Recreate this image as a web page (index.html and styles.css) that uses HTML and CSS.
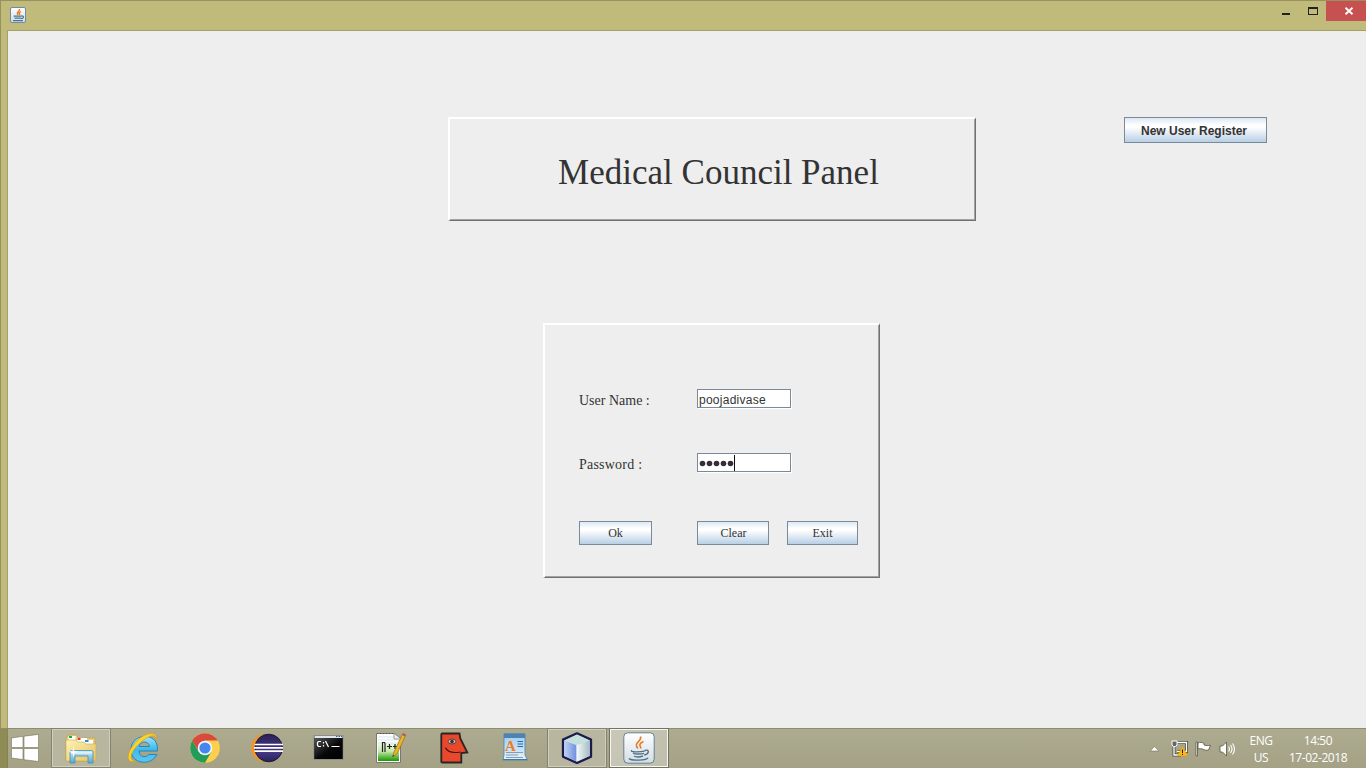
FILE: index.html
```html
<!DOCTYPE html>
<html lang="en">
<head>
<meta charset="utf-8">
<title>Medical Council Panel</title>
<link rel="stylesheet" href="styles.css">
</head>
<body>
<div class="desktop">
  <header class="titlebar">
    <svg class="app-icon" width="16" height="16" viewBox="0 0 32 32">
      <defs><linearGradient id="jbg" x1="0" y1="0" x2="0" y2="1"><stop offset="0" stop-color="#fff"/><stop offset="1" stop-color="#d3dce3"/></linearGradient></defs>
      <rect x="1" y="1" width="30" height="30" rx="3" fill="url(#jbg)" stroke="#6f8ca3" stroke-width="2"/>
      <path d="M19 4c2 5-8 6-3 12M22 9c-5 3-4 4-2 7" fill="none" stroke="#ee7a1c" stroke-width="2.8"/>
      <path d="M7 18h16M9 22h13M6 27h20M23 18c6-1 5 5-1 5" fill="none" stroke="#4a7694" stroke-width="2.5"/>
    </svg>
    <div class="controls">
      <svg width="70" height="22" viewBox="0 0 70 22" shape-rendering="crispEdges">
        <path d="M26 13h8v2h-8z" fill="#222"/>
        <path d="M52 7h10v8H52zM53 9v5h8V9z" fill="#222" fill-rule="evenodd"/>
      </svg>
      <div class="close"><svg width="10" height="8" viewBox="0 0 10 8"><path d="M1.500.7l7 6.600M8.500.7l-7 6.600" stroke="#fff" stroke-width="1.900"/></svg></div>
    </div>
  </header>

  <main class="frame">
    <section class="raised heading"><h1>Medical Council Panel</h1></section>
    <button class="btn register">New User Register</button>
    <section class="raised login">
      <label>User Name :</label>
      <div class="field">poojadivase</div>
      <label class="pw-label">Password :</label>
      <div class="field password"><svg width="35" height="7" viewBox="0 0 35 7"><g fill="#332e38"><circle cx="3.5" cy="3.5" r="2.8"/><circle cx="10.5" cy="3.5" r="2.8"/><circle cx="17.5" cy="3.5" r="2.8"/><circle cx="24.5" cy="3.5" r="2.8"/><circle cx="31.5" cy="3.5" r="2.8"/></g></svg><i class="caret"></i></div>
      <div class="actions">
        <button class="btn ok">Ok</button>
        <button class="btn clear">Clear</button>
        <button class="btn exit">Exit</button>
      </div>
    </section>
  </main>

  <footer class="taskbar">
    <div class="start"><svg width="28" height="28" viewBox="0 0 28 28"><path d="M.5 4L12 2.3V13.500H.5zM13 2.200L27.500.4v13.100H13zM.5 14.500H12v11L.5 24zM13 14.500h14.500v13L13 25.700z" fill="#fff" stroke="#77765c" stroke-width=".6"/></svg></div>
    <nav class="apps">
      <div class="app open"><svg width="32" height="32" viewBox="0 0 32 32">
        <defs><linearGradient id="fold" x1="0" y1="0" x2="1" y2="1"><stop offset="0" stop-color="#fff3b4"/><stop offset="1" stop-color="#e5c15f"/></linearGradient><linearGradient id="tray" x1="0" y1="0" x2="0" y2="1"><stop offset="0" stop-color="#d0edf8"/><stop offset="1" stop-color="#55a8d2"/></linearGradient></defs>
        <path d="M2 5l2-2h8l1 3h17v23H1V7z" fill="#e9ce79" stroke="#bd9d47" stroke-width=".6"/>
        <path d="M3.500 4h7v4h-7zM12 6h10v4H12zM19 8h9v4h-9z" fill="#fff"/>
        <path d="M4 4h3v2H4z" fill="#13b52b"/><path d="M12.500 6h3v2h-3z" fill="#de4023"/><path d="M20 8h3.500v2H20z" fill="#258ddd"/>
        <path d="M1 8h10l2 2h6l2 2h10v17H1z" fill="url(#fold)" stroke="#c9a84d" stroke-width=".6"/>
        <path d="M5 20q0-1.500 1.500-1.500h20Q28 18.500 28 20v11h-5v-7H10v7H5z" fill="url(#tray)" stroke="#4290b7" stroke-width=".8"/>
        <path d="M6 21h21" stroke="#fff" stroke-width="1.200" opacity=".8"/>
        <path d="M8.500 14l.8 5 4.700.8-4.700.9-.8 5-.9-5-4.600-.9 4.600-.8z" fill="#fff"/>
      </svg></div>
      <div class="app"><svg width="32" height="32" viewBox="0 0 32 32">
        <defs><linearGradient id="ie" x1="0" y1="0" x2="0" y2="1"><stop offset="0" stop-color="#9ee5fb"/><stop offset=".5" stop-color="#3fb9eb"/><stop offset="1" stop-color="#5dc7ef"/></linearGradient></defs>
        <path d="M30.500 19H12c.4 6.500 7.500 7 9.500 3.500h8.300C25 34 4 33 4 17.500 4 2 27 0 30 13c.5 2 .5 4 .5 6zM12 14.500h10.500c-.8-6-9.500-6-10.500 0z" fill="url(#ie)" stroke="#2180b5" stroke-width=".9"/>
        <path d="M29 8C32-1 18-1 8 11-1 21-1 32 8 29c-7-1-4-9 3-16C20 4 29 0 29 8z" fill="#fcd12d" stroke="#d69c11" stroke-width=".6"/>
      </svg></div>
      <div class="app"><svg width="32" height="32" viewBox="0 0 32 32">
        <circle cx="16" cy="16" r="14.800" fill="#fdd04b"/>
        <path d="M16 8.600h12.800A14.800 14.800 0 0 0 3.200 8.600l6.400 11z" fill="#d94a3e"/>
        <path d="M3.200 8.600A14.800 14.800 0 0 0 16 30.800l6.400-11.100L16 22l-6.400-2.300z" fill="#1f9d59"/>
        <circle cx="16" cy="16" r="7.300" fill="#f5f5f5"/><circle cx="16" cy="16" r="5.600" fill="#4587f1"/>
      </svg></div>
      <div class="app"><svg width="32" height="32" viewBox="0 0 32 32">
        <defs><linearGradient id="ecl" x1="0" y1="0" x2="0" y2="1"><stop offset="0" stop-color="#2c2255"/><stop offset=".65" stop-color="#47378a"/><stop offset="1" stop-color="#2a2152"/></linearGradient></defs>
        <circle cx="14.500" cy="16" r="14.300" fill="#f7941e"/><circle cx="18" cy="16" r="14.800" fill="#aaa789"/>
        <circle cx="17.700" cy="16" r="13.800" fill="url(#ecl)" stroke="#1c1836"/>
        <path d="M3.500 12.500h28.500M3 15.800h29.500M3.500 19.100h28.500" stroke="#fff" stroke-width="1.700"/>
      </svg></div>
      <div class="app"><svg width="32" height="32" viewBox="0 0 32 32">
        <defs><linearGradient id="cmd" x1="0" y1="0" x2="1" y2="1"><stop offset="0" stop-color="#555"/><stop offset=".55" stop-color="#080808"/><stop offset="1" stop-color="#000"/></linearGradient></defs>
        <rect x="1" y="3.500" width="29" height="24" fill="#000" stroke="#8b8e91"/><path d="M1.500 6h28v21h-28z" fill="url(#cmd)"/>
        <path d="M1.500 4h28v2h-28z" fill="#dbe6ef"/><path d="M23 4h1.500v1H23zM25.500 4H27v1h-1.500zM28 4h1v1h-1z" fill="#40658a"/>
        <path d="M8 9.500H5.500l-1 1v3l1 1H8M10.500 10v1.500M10.500 13v1.500M12.500 9l3 6M18.500 14.500h8" stroke="#fff" fill="none" stroke-width="1.200"/>
      </svg></div>
      <div class="app"><svg width="32" height="32" viewBox="0 0 32 32">
        <defs><linearGradient id="npp" x1="0" y1="0" x2="0" y2="1"><stop offset="0" stop-color="#f7fcef"/><stop offset=".5" stop-color="#c3e7a8"/><stop offset="1" stop-color="#189800"/></linearGradient></defs>
        <path d="M1.500 1.500h18l6 5v24h-24z" fill="#fff" stroke="#777"/><path d="M3 10h21v19H3z" fill="url(#npp)"/>
        <path d="M3 5h17M3 8h21M3 11h21" stroke="#d7e7eb"/><path d="M2 1.500h18" stroke="#555" stroke-dasharray="1 2"/><path d="M19 2v5h6" fill="#eee" stroke="#999"/>
        <path d="M7.500 20v-9.500h2l.5 1V20M12 14.500h5M14.500 12v5M18 14.500h4M20 12v5" fill="none" stroke="#222" stroke-width="1.200"/>
        <path d="M17.500 25l1.500-5L27.500 2l3 1.500L22 22z" fill="#eab42e" stroke="#957018" stroke-width=".7"/><path d="M28 1l3 1.500-1 2-3-1.500z" fill="#b85959"/><path d="M17.500 25l.5-2 1.300.6z" fill="#333"/>
      </svg></div>
      <div class="app"><svg width="32" height="32" viewBox="0 0 32 32">
        <path d="M4.500 1.500h18l.8 5 7 14-6 .500v9.500h-19q-1 0-1-1v-27q0-1 1-1z" fill="#e8482c" stroke="#2b2522" stroke-width="1.800"/>
        <path d="M8.500 15.500c2 5.500 9 5.500 15 4.500" fill="none" stroke="#421812" stroke-width="1.200"/><ellipse cx="15" cy="9.500" rx="3.800" ry="2.400" fill="#d6c9bb" stroke="#3c2824" stroke-width=".8"/><circle cx="15" cy="9.500" r="1.800" fill="#333"/>
      </svg></div>
      <div class="app"><svg width="32" height="32" viewBox="0 0 32 32">
        <defs><linearGradient id="wp" x1="0" y1="0" x2="0" y2="1"><stop offset="0" stop-color="#9bccf0"/><stop offset="1" stop-color="#e5f3fc"/></linearGradient></defs>
        <path d="M5 2h21v21l2.500 5H4l1-5z" fill="url(#wp)" stroke="#4884b4" stroke-width=".8"/><path d="M5 1.500h21V6H5z" fill="#4d82b1"/>
        <text x="6" y="18.500" class="wordpad-letter">A</text><path d="M18.500 9.500H24M18.500 12H24M18.500 14.500H24" stroke="#296ba6"/><path d="M7 20.500h17M7 23h12M7 25.500h17" stroke="#8c9bab"/><path d="M4 27.500h24" stroke="#3e78a4"/>
      </svg></div>
      <div class="app open"><svg width="32" height="32" viewBox="0 0 32 32">
        <defs><linearGradient id="nb1"><stop stop-color="#bdd2f5"/><stop offset="1" stop-color="#718fdc"/></linearGradient><linearGradient id="nb2"><stop stop-color="#f4fafc"/><stop offset="1" stop-color="#a3bbc3"/></linearGradient></defs>
        <path d="M16 1.300l14 6.300v17L16 31 2 24.600v-17z" fill="#bcd6d8" stroke="#1d1b4e" stroke-width="2.300" stroke-linejoin="round"/>
        <path d="M3.200 8.500L15.500 13v16.500L3.200 24z" fill="url(#nb1)"/><path d="M15.500 13L28.800 8.500V24l-13.300 5.500z" fill="url(#nb2)"/><path d="M16 2.700L28.800 8.500 15.500 13 3.200 8.500z" fill="#c5dfdc"/>
      </svg></div>
      <div class="app open active"><svg width="32" height="32" viewBox="0 0 32 32">
        <rect x=".8" y=".8" width="30.400" height="30.400" rx="4" fill="url(#jbg)" stroke="#668092"/>
        <path d="M17.500 4.500c2 5-8 6-2.500 12M20.500 9.500c-6 3-3 4-2.500 7" fill="none" stroke="#ed7822" stroke-width="1.600"/>
        <path d="M9 18.500c-3 1.500 7 2 13 .3M10 21c2 1.500 8 1.200 11 .3M11 24c2 1.300 6 1 9 0M6 26.500c2 2.500 18 2 19-.8M22 18.500c5-2 4 4-.8 4.500" fill="none" stroke="#4d7187" stroke-width="1.400"/>
      </svg></div>
    </nav>
    <div class="tray">
      <svg width="9" height="6" viewBox="0 0 9 6"><path d="M4.500.5L8.700 5H.3z" fill="#fff" stroke="#66654f" stroke-width=".5"/></svg>
      <svg class="net" width="17" height="17" viewBox="0 0 17 17"><path d="M6 2.500h9.500v9H6M3 7v8h7" fill="none" stroke="#4f4e3f" stroke-width="3"/><path d="M6 2.500h9.500v9H6M3 7v8h7" fill="none" stroke="#fff" stroke-width="1.300"/><path d="M1 1h5v4L4.500 6.500h-2L1 5z" fill="#666" stroke="#fff"/><path d="M11.500 6.500l5 9.500h-10z" fill="#ffb911" stroke="#e09a00" stroke-width=".5"/><path d="M11.500 9.500V13M11.500 13.800V15" stroke="#222" stroke-width="1"/></svg>
      <svg class="flag" width="16" height="16" viewBox="0 0 16 16"><path d="M1 1h1.500v14H1zM3 2c2-1 4-.8 6 .5v1.500c2 .8 4 .7 6.500.3L13.500 9c-2 .6-4 .2-6-1C6 7.500 4.500 7.500 3 8z" fill="#fff" stroke="#56553f" stroke-width=".8"/></svg>
      <svg class="sound" width="17" height="16" viewBox="0 0 17 16"><path d="M1 5h2.500l4-4v14l-4-4H1z" fill="#fff" stroke="#56553f" stroke-width=".8"/><path d="M9.500 5.500q2 2.500 0 5M11.500 4q3 4 0 8M13.500 2.500q4 5.500 0 11" fill="none" stroke="#fff" stroke-width="1.100"/></svg>
      <div class="lang">ENG<br>US</div>
      <div class="clock">14:50<br>17-02-2018</div>
    </div>
  </footer>
</div>
</body>
</html>
```
FILE: styles.css
```css
* { box-sizing: border-box; }
body { margin: 0; overflow: hidden; }
.desktop {
  width: 1366px; height: 768px;
  display: grid; grid-template-rows: 30px 698px 40px;
  background: #c1bb7b;
  font-family: "Liberation Sans", Arial, sans-serif;
}
.titlebar {
  display: flex; justify-content: space-between; align-items: flex-start;
  border-top: 1px solid #979160; border-left: 1px solid #979160;
}
.app-icon { margin: 6px 0 0 9px; }
.controls { display: flex; height: 20px; }
.controls > svg { margin-top: -1px; }
.close {
  width: 40px; height: 20px; padding-left: 6px;
  display: flex; align-items: center; justify-content: center;
  background: #c75050;
}
.frame {
  margin-left: 7px;
  border: solid #a49e6b; border-width: 1px 0 0 1px;
  background: #eee;
  box-shadow: -6px 0 #c1bb7b, -7px 0 #979160;
  display: grid; grid-template-columns: 528px 143px;
  grid-template-rows: 104px 255px;
  row-gap: 102px; column-gap: 148px;
  padding: 86px 0 0 440px;
}
.raised {
  border: solid; border-width: 2px 1px 1px 2px;
  border-color: #fff #717171 #717171 #fff;
  box-shadow: inset -1px -1px #a2a2a2;
}
.heading { display: flex; align-items: center; justify-content: center; padding: 6px 0 0 12px; }
h1 {
  margin: 0; font: 35px/42px "Liberation Serif", "Times New Roman", serif;
  color: #333; white-space: nowrap;
}
.btn {
  padding: 0; border: 1px solid #7a8a99; border-radius: 0;
  background: linear-gradient(#dde8f3 0, #fff 30%, #fff 38%, #b8cfe5 100%);
  color: #333; font: 12px/14px "Liberation Serif", "Times New Roman", serif;
}
.register {
  width: 143px; height: 26px; padding: 1px 3px 0 0;
  font: bold 12px/14px "Liberation Sans", Arial, sans-serif;
}
.login {
  width: 337px; height: 255px; margin-left: 95px; padding: 64px 0 0 34px;
  display: grid; grid-template-columns: 118px 95px;
  grid-template-rows: 20px 20px 24px; row-gap: 44px;
  align-content: start;
}
label {
  padding-top: 4px; color: #333;
  font: 14px/16px "Liberation Serif", "Times New Roman", serif;
}
.pw-label { letter-spacing: .22px; }
.field {
  width: 94px; height: 19px; padding: 3px 0 0 1px;
  border: 1px solid #7a8a99; background: #fff;
  box-shadow: 1px 1px #fff;
  color: #333; font-size: 12px; line-height: 14px; letter-spacing: .26px;
}
.password { display: flex; padding-top: 0; }
.password svg { margin-top: 6px; }
.caret { width: 1px; height: 16px; margin-top: 1px; background: #111; }
.actions { grid-column: 1 / 3; display: flex; margin-top: 4px; height: 24px; }
.actions .btn { flex: none; }
.ok { width: 73px; }
.clear { width: 72px; margin-left: 45px; padding-left: 1px; }
.exit { width: 71px; margin-left: 18px; }
.taskbar {
  position: relative; display: flex;
  border-top: 1px solid #8f8d6c;
  background: linear-gradient(90deg, #8f8b55 0 7px, #858253 7px 8px, transparent 8px), linear-gradient(#adab90, #a4a185);
}
.start { width: 51px; padding: 5px 0 0 11px; }
.apps { display: flex; gap: 2px; }
.app { width: 60px; height: 39px; padding: 3px 14px; flex: none; }
.app svg { display: block; }
.open { border: 1px solid #858370; padding: 3px 13px 2px; height: 40px; margin-top: -1px; background: #b8b69f; box-shadow: inset 0 0 0 1px #cfcdbd; }
.active { background: linear-gradient(120deg, #cac8b8, #bfbdac); border-color: #737164; box-shadow: inset 0 0 0 1px #f7f7f1; }
.wordpad-letter { font: bold 15px "Liberation Serif", serif; fill: #f47b20; }
.tray {
  flex: 1; display: flex; align-items: center;
  padding-left: 481px; color: #fff;
  font: 12px/17px "Open Sans", "Noto Sans", sans-serif; text-align: center;
}
.tray svg { flex: none; }
.net { margin-left: 12px; }
.flag { margin-left: 7px; }
.sound { margin-left: 8px; }
.lang { width: 30px; margin-left: 10px; letter-spacing: -.4px; }
.clock { width: 70px; margin-left: 7px; letter-spacing: -.45px; }
```
